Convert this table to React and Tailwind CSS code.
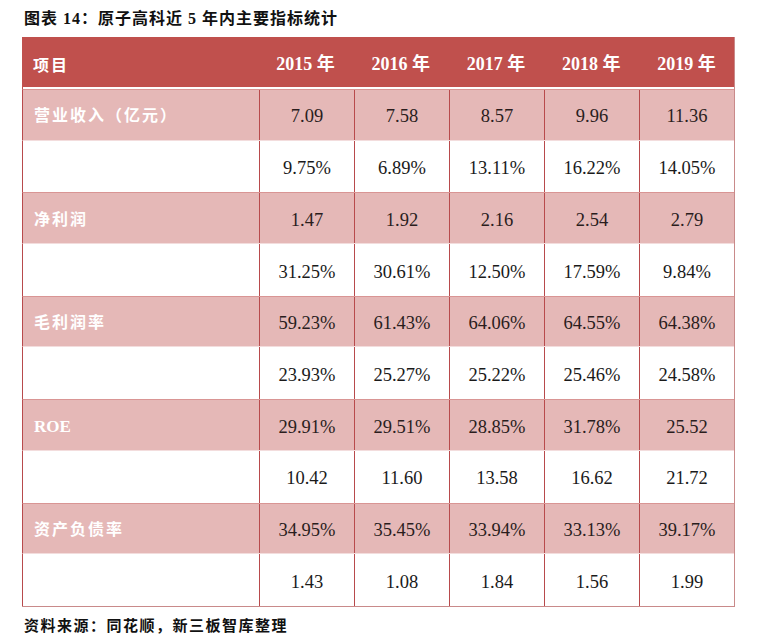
import React from "react";

const years = ["2015 年", "2016 年", "2017 年", "2018 年", "2019 年"];

const rows = [
  { label: "营业收入（亿元）", vals: ["7.09", "7.58", "8.57", "9.96", "11.36"], pink: true },
  { label: "", vals: ["9.75%", "6.89%", "13.11%", "16.22%", "14.05%"], pink: false },
  { label: "净利润", vals: ["1.47", "1.92", "2.16", "2.54", "2.79"], pink: true },
  { label: "", vals: ["31.25%", "30.61%", "12.50%", "17.59%", "9.84%"], pink: false },
  { label: "毛利润率", vals: ["59.23%", "61.43%", "64.06%", "64.55%", "64.38%"], pink: true },
  { label: "", vals: ["23.93%", "25.27%", "25.22%", "25.46%", "24.58%"], pink: false },
  { label: "ROE", vals: ["29.91%", "29.51%", "28.85%", "31.78%", "25.52"], pink: true, latin: true },
  { label: "", vals: ["10.42", "11.60", "13.58", "16.62", "21.72"], pink: false },
  { label: "资产负债率", vals: ["34.95%", "35.45%", "33.94%", "33.13%", "39.17%"], pink: true },
  { label: "", vals: ["1.43", "1.08", "1.84", "1.56", "1.99"], pink: false },
];

const serif = "font-['Liberation_Serif','Noto_Sans_CJK_SC',serif]";
const cjk = "font-['Liberation_Serif','Noto_Sans_CJK_SC',sans-serif]";

export default function App() {
  return (
    <div className="w-[764px] h-[642px] bg-white overflow-hidden">
      <div className={`pl-[24px] pt-[7px] h-[37px] text-[16px] font-bold tracking-[1px] text-[#111] ${cjk}`}>
        图表 14：原子高科近 5 年内主要指标统计
      </div>
      <div className="ml-[22px] w-[713px] border-r border-b border-[#c98a8a]">
        <div className={`grid grid-cols-[236px_repeat(5,1fr)] h-[50px] pt-[4px] bg-[#c0504d] text-white font-bold items-center ${serif}`}>
          <div className="pl-[11px] text-[16px] tracking-[2px] font-['Noto_Sans_CJK_SC',sans-serif]">项目</div>
          {years.map((y) => (
            <div key={y} className="text-center text-[18px]">{y}</div>
          ))}
        </div>
        <div className="h-[2px] bg-white border-l border-[#c0504d]"></div>
        {rows.map((r, i) => (
          <div
            key={i}
            className={`grid grid-cols-[236px_repeat(5,1fr)] h-[51.7px] border-l border-[#b84a4c] ${
              r.pink
                ? "bg-[#e5b8b7] border-t border-t-[#d99594] border-b border-b-[#f3dddd]"
                : "bg-white"
            }`}
          >
            <div
              className={`flex items-center pl-[11px] pt-[3px] text-white font-bold text-[16px] font-['Liberation_Serif','Noto_Sans_CJK_SC',serif] ${
                r.latin ? "tracking-normal text-[17px]" : "tracking-[2px]"
              }`}
            >
              {r.label}
            </div>
            {r.vals.map((v, j) => (
              <div
                key={j}
                className={`flex items-center justify-center pt-[5px] border-l border-[#b84a4c] text-[18.5px] ${serif} ${
                  r.pink ? "text-[#2a1d1d]" : "text-[#1a1a1a]"
                }`}
              >
                {v}
              </div>
            ))}
          </div>
        ))}
      </div>
      <div className={`pl-[24px] pt-[8px] text-[15px] font-bold tracking-[1.5px] text-[#111] ${cjk}`}>
        资料来源：同花顺，新三板智库整理
      </div>
    </div>
  );
}
